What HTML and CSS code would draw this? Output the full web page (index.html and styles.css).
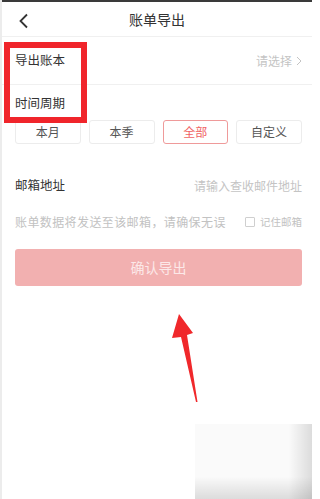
FILE: index.html
```html
<!DOCTYPE html>
<html lang="zh">
<head>
<meta charset="utf-8">
<link rel="stylesheet" href="styles.css">
</head>
<body>
<div class="page">
  <div class="statusbar"></div>
  <header class="header">
    <svg class="back" width="12" height="16" viewBox="0 0 12 16"><path d="M9 1.5 L2.5 8 L9 14.5" fill="none" stroke="#333" stroke-width="1.8"/></svg>
    <div class="title">账单导出</div>
  </header>
  <div class="row book">
    <span class="label">导出账本</span>
    <span class="hint">请选择 <svg width="6" height="10" viewBox="0 0 6 10"><path d="M1 1 L5 5 L1 9" fill="none" stroke="#c4c4c4" stroke-width="1"/></svg></span>
  </div>
  <div class="period">
    <div class="label">时间周期</div>
    <div class="chips">
      <div class="chip">本月</div>
      <div class="chip">本季</div>
      <div class="chip active">全部</div>
      <div class="chip">自定义</div>
    </div>
  </div>
  <div class="row email">
    <span class="label">邮箱地址</span>
    <span class="hint">请输入查收邮件地址</span>
  </div>
  <div class="note">
    <span class="note-text">账单数据将发送至该邮箱，请确保无误</span>
    <span class="remember"><span class="box"></span>记住邮箱</span>
  </div>
  <div class="submit">确认导出</div>

  <div class="redbox"></div>
  <svg class="arrow" width="312" height="499" viewBox="0 0 312 499"><polygon points="179,314 193,333 187,335 197.5,402 196,402 181,337 172,338" fill="#f0282b"/></svg>
  <div class="watermark"></div>
</div>
</body>
</html>
```
FILE: styles.css
```css
* { box-sizing: border-box; }
html, body { margin: 0; padding: 0; background: #fff; }
body { font-family: "Noto Sans CJK SC", "Noto Sans", sans-serif; color: #333; }
.page { position: relative; width: 312px; height: 499px; overflow: hidden; background: #fff; border-left: 2px solid #ececec; }
.statusbar { height: 2px; background: #3a3a3a; margin-left: -2px; }
.header { position: relative; height: 35px; border-bottom: 1px solid #f0f0f0; display: flex; align-items: center; justify-content: center; }
.back { position: absolute; left: 16px; top: 11px; }
.title { font-size: 14px; color: #333; line-height: 1; }
.row { display: flex; align-items: center; justify-content: space-between; padding: 0 10px 0 13px; }
.book { height: 48px; border-bottom: 1px solid #f0f0f0; }
.label { font-size: 12.5px; color: #333; line-height: 1; }
.hint { font-size: 12px; color: #c4c4c4; line-height: 1; display: flex; align-items: center; gap: 4px; }
.period { padding: 12px 10px 0 13px; }
.chips { display: grid; grid-template-columns: repeat(4, 1fr); column-gap: 8px; margin-top: 10px; }
.chip { height: 24px; border: 1px solid #ececec; border-radius: 3px; display: flex; align-items: center; justify-content: center; font-size: 12px; color: #555; }
.chip.active { border-color: #ef9a9a; color: #f06464; }
.email { height: 36px; margin-top: 24px; }
.email .hint { font-size: 12px; }
.note { display: flex; justify-content: space-between; align-items: center; padding: 0 10px 0 13px; margin-top: 0; height: 36px; font-size: 10.5px; color: #c2c2c2; }
.note-text { font-size: 12px; letter-spacing: 0.4px; }
.remember { display: flex; align-items: center; gap: 5px; }
.box { width: 10px; height: 10px; border: 1px solid #cfcfcf; border-radius: 1px; }
.submit { margin: 9px 10px 0 13px; height: 37px; background: #f2b0b0; border-radius: 3px; display: flex; align-items: center; justify-content: center; color: #fce8e8; font-size: 14px; }
.redbox { position: absolute; left: 2px; top: 42px; width: 83px; height: 81px; border: 6px solid #f0252b; }
.arrow { position: absolute; left: -2px; top: 0; }
.watermark { position: absolute; left: 193px; top: 424px; width: 117px; height: 75px; background: linear-gradient(to right, rgba(0,0,0,0) 80%, rgba(0,0,0,0.12) 100%), linear-gradient(to bottom, rgba(0,0,0,0) 70%, rgba(0,0,0,0.12) 100%), rgba(0,0,0,0.02); }
```
